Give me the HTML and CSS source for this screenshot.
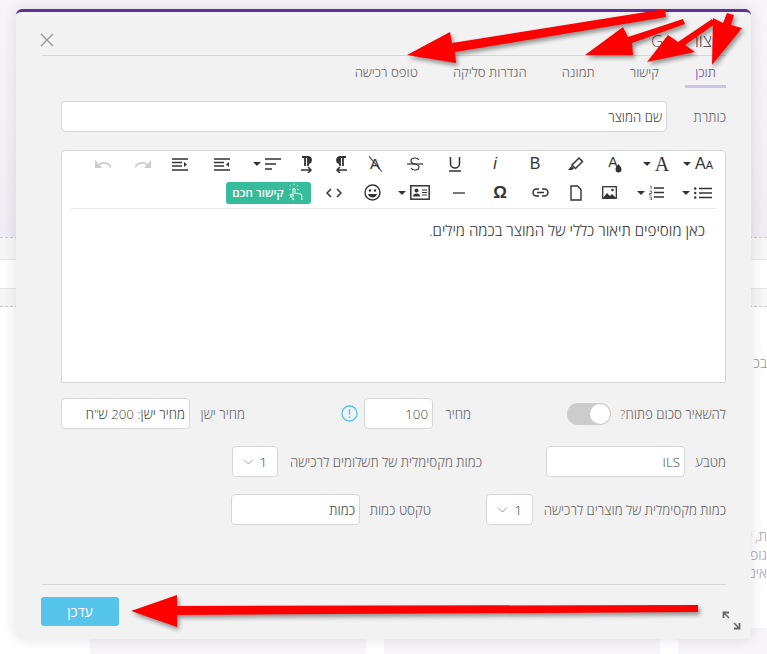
FILE: index.html
```html
<!DOCTYPE html>
<html lang="he">
<head>
  <title>עריכת מוצר</title>
  <link rel="stylesheet" href="styles.css">
</head>
<body>
  <!-- page behind the dialog -->
  <div class="backdrop">
    <div class="back-top"></div>
    <div class="back-band"></div>
    <div class="back-gap"></div>
    <div class="back-band back-band-low"></div>
    <div class="back-body">
      <p class="back-line">בכ</p>
      <div class="back-para">
        <p>ת, א</p>
        <p>גופ</p>
        <p>אינ</p>
      </div>
    </div>
    <div class="back-cards">
      <div class="back-card"></div>
      <div class="back-card"></div>
      <div class="back-card"></div>
    </div>
  </div>

  <div class="modal">
    <div class="modal-head">
      <h3 class="modal-title">צור Gr</h3>
      <svg class="close-icon" width="16" height="16" viewBox="0 0 16 16"><path d="M2 2l12 12M14 2L2 14" stroke="#999" stroke-width="1.4" fill="none"/></svg>
    </div>

    <div class="tabs">
      <a class="tab tab-active">תוכן</a>
      <a class="tab">קישור</a>
      <a class="tab">תמונה</a>
      <a class="tab">הגדרות סליקה</a>
      <a class="tab">טופס רכישה</a>
    </div>

    <div class="modal-body">
      <div class="row row-title">
        <label class="label label-title">כותרת</label>
        <input class="input input-title" type="text" value="שם המוצר">
      </div>

      <div class="editor">
        <div class="toolbar">
          <div class="tool-row">
            <span class="tool w42"><span class="glyph glyph-size">A<small>A</small></span><i class="caret"></i></span>
            <span class="tool w42"><span class="glyph glyph-serif">A</span><i class="caret"></i></span>
            <span class="tool tool-color"><span class="glyph glyph-color">A</span><svg class="drop" width="7" height="9" viewBox="0 0 7 9"><path d="M3.500 0c2 2.500 3 3.500 3 5.500a3 3 0 0 1-6 0C.5 3.500 1.500 2.500 3.500 0z" fill="#333"/></svg></span>
            <span class="tool"><svg width="17" height="16" viewBox="0 0 17 16"><path d="M5 9l7-7 3.500 3.500-7 7z" fill="none" stroke="#333" stroke-width="1.500"/><path d="M4.500 10l2.500 2.500-2 1.500H1z" fill="#333"/></svg></span>
            <span class="tool"><span class="glyph">B</span></span>
            <span class="tool"><span class="glyph glyph-italic">i</span></span>
            <span class="tool"><svg width="14" height="16" viewBox="0 0 14 16"><path d="M2.500 1v6.500a4.500 4.500 0 0 0 9 0V1" fill="none" stroke="#333" stroke-width="1.500"/><path d="M1 15h12" stroke="#333" stroke-width="1.500"/></svg></span>
            <span class="tool"><svg width="16" height="14" viewBox="0 0 16 14"><path d="M12 3c-1-1.500-2.500-2-4-2-2.500 0-4 1.300-4 3 0 4 8 2 8 6 0 1.800-1.700 3-4 3-1.800 0-3.200-.7-4-2" fill="none" stroke="#333" stroke-width="1.200"/><path d="M0 7h16" stroke="#333" stroke-width="1.200"/></svg></span>
            <span class="tool"><span class="glyph glyph-clear">A</span></span>
            <span class="tool w28"><svg width="13" height="17" viewBox="0 0 13 17"><path d="M5 1h6M5 1v9M8 1v9M5 1a3 3 0 0 0 0 6" fill="#333" stroke="#333" stroke-width="1.800"/><path d="M12 14H2M5 11l-3 3 3 3" fill="none" stroke="#333" stroke-width="1.500"/></svg></span>
            <span class="tool"><svg width="13" height="17" viewBox="0 0 13 17"><path d="M1 1h6M4 1v9M7 1v9M7 1a3 3 0 0 1 0 6" fill="#333" stroke="#333" stroke-width="1.800"/><path d="M0 14h10M7 11l3 3-3 3" fill="none" stroke="#333" stroke-width="1.500"/></svg></span>
            <span class="tool"><svg width="16" height="12" viewBox="0 0 16 12"><path d="M0 1h16M0 6h11M0 11h7" stroke="#333" stroke-width="1.500"/></svg><i class="caret"></i></span>
            <span class="tool w50"><svg width="16" height="13" viewBox="0 0 16 13"><path d="M0 1h16M0 12h16M0 4.500h10M0 8h10" stroke="#333" stroke-width="1.400"/><path d="M15 4v5l-3-2.500z" fill="#333"/></svg></span>
            <span class="tool w34"><svg width="16" height="13" viewBox="0 0 16 13"><path d="M0 1h16M0 12h16M0 4.500h10M0 8h10" stroke="#333" stroke-width="1.400"/><path d="M12 4v5l3-2.500z" fill="#333"/></svg></span>
            <span class="tool"><svg width="16" height="8" viewBox="0 0 16 8"><path d="M0 7.500C2 3 7 1 13 5" fill="none" stroke="#ccc" stroke-width="1.800"/><path d="M16 0v8H9z" fill="#ccc"/></svg></span>
            <span class="tool"><svg width="16" height="8" viewBox="0 0 16 8"><path d="M16 7.500C14 3 9 1 3 5" fill="none" stroke="#ccc" stroke-width="1.800"/><path d="M0 0v8h7z" fill="#ccc"/></svg></span>
          </div>
          <div class="tool-row tool-row-low">
            <span class="tool w44"><svg width="18" height="12" viewBox="0 0 18 12"><path d="M5 1.500h13M5 6h13M5 10.500h13" stroke="#333" stroke-width="1.500"/><circle cx="1.200" cy="1.500" r="1.200" fill="#333"/><circle cx="1.200" cy="6" r="1.200" fill="#333"/><circle cx="1.200" cy="10.500" r="1.200" fill="#333"/></svg><i class="caret"></i></span>
            <span class="tool w50"><svg width="15" height="15" viewBox="0 0 15 15"><path d="M5 3h10M5 7.500h10M5 12h10" stroke="#333" stroke-width="1.500"/><path d="M1 1h1.200v3M.5 6h2v2.500h-2v1.500h2M.5 12h2v3h-2" fill="none" stroke="#333" stroke-width=".7"/></svg><i class="caret"></i></span>
            <span class="tool w32"><svg width="15" height="13" viewBox="0 0 15 13"><rect x=".7" y=".7" width="13.600" height="11.600" fill="none" stroke="#333" stroke-width="1.300"/><path d="M1 12l4-5 3 3 2-2 4 4z" fill="#333"/><circle cx="10.500" cy="4" r="1.300" fill="#333"/></svg></span>
            <span class="tool w34"><svg width="12" height="16" viewBox="0 0 12 16"><path d="M1 1h6.500L11 4.500V15H1z" fill="none" stroke="#333" stroke-width="1.400"/></svg></span>
            <span class="tool w38"><svg width="17" height="9" viewBox="0 0 17 9"><path d="M7 1H4.500a3.500 3.500 0 0 0 0 7H7M10 1h2.500a3.500 3.500 0 0 1 0 7H10M5 4.500h7" fill="none" stroke="#333" stroke-width="1.500"/></svg></span>
            <span class="tool w42"><span class="glyph glyph-omega">Ω</span></span>
            <span class="tool"><svg width="12" height="2" viewBox="0 0 12 2"><path d="M0 1h12" stroke="#555" stroke-width="1.600"/></svg></span>
            <span class="tool w50"><svg width="20" height="15" viewBox="0 0 20 15"><rect x=".8" y=".8" width="18.400" height="13.400" fill="none" stroke="#333" stroke-width="1.500"/><circle cx="6.500" cy="5.500" r="2" fill="#333"/><path d="M3 11.500c0-2 1.500-3 3.500-3s3.500 1 3.500 3z" fill="#333"/><path d="M12 5h5M12 7.500h5M12 10h5" stroke="#333"/></svg><i class="caret"></i></span>
            <span class="tool w34"><svg width="17" height="17" viewBox="0 0 17 17"><circle cx="8.500" cy="8.500" r="7.500" fill="none" stroke="#333" stroke-width="1.400"/><circle cx="6" cy="6.500" r="1.200" fill="#333"/><circle cx="11" cy="6.500" r="1.200" fill="#333"/><path d="M4 10h9c-.5 2-2.200 3.500-4.500 3.500S4.500 12 4 10z" fill="#333"/></svg></span>
            <span class="tool w42"><svg width="16" height="10" viewBox="0 0 16 10"><path d="M5 1L1 5l4 4M11 1l4 4-4 4" fill="none" stroke="#333" stroke-width="1.500"/></svg></span>
            <button class="smart-link">
              <svg width="18" height="19" viewBox="0 0 18 19"><path d="M7 17l-3.500-4c-.8-1 .5-2 1.500-1.200l1 1V6.500c0-1.500 2-1.500 2 0V10l5 .8c1 .2 1.800 1 1.800 2V17" fill="none" stroke="#d8f3ea" stroke-width="1.200"/><path d="M3 2l1.500 2M7 .5V3M11 2L9.500 4M2 6.500h2M10 6.500h2" stroke="#d8f3ea" stroke-dasharray="1.500 .8"/></svg>
              קישור חכם
            </button>
          </div>
        </div>
        <div class="editor-text">
          <p>כאן מוסיפים תיאור כללי של המוצר בכמה מילים.</p>
        </div>
      </div>

      <div class="row row-fields">
        <label class="label label-open">להשאיר סכום פתוח?</label>
        <span class="toggle"><i class="knob"></i></span>
        <label class="label label-price">מחיר</label>
        <input class="input input-price" type="text" value="100">
        <svg class="info-icon" width="17" height="17" viewBox="0 0 17 17"><circle cx="8.500" cy="8.500" r="7.500" fill="none" stroke="#56c5ec" stroke-width="1.300"/><path d="M8.500 4v5.500M8.500 11.500v1.500" stroke="#56c5ec" stroke-width="1.500"/></svg>
        <label class="label label-old">מחיר ישן</label>
        <input class="input input-old" type="text" value="מחיר ישן: 200 ש&quot;ח">
      </div>

      <div class="row row-fields">
        <label class="label label-currency">מטבע</label>
        <input class="input input-currency" type="text" value="ILS">
        <label class="label label-pay">כמות מקסימלית של תשלומים לרכישה</label>
        <span class="select select-pay">1<svg width="11" height="6" viewBox="0 0 11 6"><path d="M1 .5l4.500 4.500L10 .5" fill="none" stroke="#999"/></svg></span>
      </div>

      <div class="row row-fields">
        <label class="label label-max">כמות מקסימלית של מוצרים לרכישה</label>
        <span class="select select-max">1<svg width="11" height="6" viewBox="0 0 11 6"><path d="M1 .5l4.500 4.500L10 .5" fill="none" stroke="#999"/></svg></span>
        <label class="label label-qty">טקסט כמות</label>
        <input class="input input-qty" type="text" value="כמות">
      </div>
    </div>

    <div class="modal-foot">
      <svg class="expand-icon" width="19" height="19" viewBox="0 0 19 19"><path d="M2 2l5 5M12 12l5 5" stroke="#666" stroke-width="1.500"/><path d="M1.500 7V1.500H7M12 17.500h5.500V12" fill="none" stroke="#666" stroke-width="1.800"/></svg>
      <button class="save-btn">עדכן</button>
    </div>
  </div>

  <!-- red arrows drawn over the screenshot -->
  <svg class="arrows" width="767" height="654" viewBox="0 0 767 654">
    <polygon points="665,9 666,17 455,52 456,63 407,55 450,32 452,43"/>
    <polygon points="683,19 685,24 632,43 633,55 585,55 623,27 628,37"/>
    <polygon points="712,19 715,24 685,45 695,52 647,62 668,35 678,42"/>
    <polygon points="727,13 734,15 731,25 742,28 712,65 713,18 723,23"/>
    <polygon points="698,605 698,612 177,615 177,627 131,611 177,595 177,606"/>
  </svg>
</body>
</html>
```

FILE: styles.css
```css
* {
  box-sizing: border-box;
}

html, body {
  margin: 0;
  padding: 0;
  height: 654px;
  overflow: hidden;
}

body {
  position: relative;
  width: 767px;
  background-color: #fff;
  font-family: "Open Sans", "Liberation Sans", sans-serif;
  font-weight: 300;
  color: #666;
  font-size: 13px;
}

p {
  margin: 0;
}

/* page behind the dialog */
.backdrop {
  display: flex;
  flex-direction: column;
  height: 654px;
}

.back-top {
  height: 238px;
  background-color: #f8f5fa;
  background-image: linear-gradient(#f8f5fa, #f1ecf3);
  border-bottom: 1px dashed #ccc;
}

.back-band {
  height: 22px;
  background-color: #f6f6f6;
  border-bottom: 1px solid #e6e6e6;
}

.back-gap {
  height: 28px;
}

.back-band-low {
  height: 19px;
  border-top: 1px solid #e6e6e6;
  border-bottom: 1px dashed #ccc;
}

.back-body {
  flex: 1;
  direction: rtl;
  color: #9a9a9a;
  font-size: 14px;
  padding-top: 46px;
}

.back-para {
  margin-top: 155px;
  line-height: 18.500px;
  color: #a5a5b5;
}

.back-cards {
  display: flex;
  gap: 18px;
  height: 26px;
  padding-left: 90px;
}

.back-card {
  flex: 0 0 276px;
  background-color: #f8f5fa;
}

.back-card:last-child {
  flex: 1 1 0;
}

/* dialog */
.modal {
  position: absolute;
  left: 16px;
  top: 9px;
  width: 735px;
  height: 630px;
  direction: rtl;
  background-color: #f2f2f2;
  border-top: 3px solid #5c3398;
  border-radius: 6px;
  box-shadow: 0 0 14px rgba(0, 0, 0, 0.12);
  padding: 0 25px 0 26px;
}

.modal-head {
  display: flex;
  align-items: center;
  justify-content: space-between;
  height: 44px;
  padding-top: 13px;
  padding-right: 14px;
  border-bottom: 1px solid #d6d6d6;
}

.modal-title {
  margin: 0;
  font-size: 17px;
  font-weight: 300;
  word-spacing: 16px;
  color: #555;
}

.close-icon {
  margin-left: -3px;
}

.tabs {
  display: flex;
  height: 32px;
}

.tab {
  display: block;
  padding: 7px 0 0;
  font-size: 13.200px;
  color: #666;
  margin-left: 35px;
}

.tab-active {
  width: 41px;
  margin-left: 26px;
  text-align: center;
  color: #6f4bb0;
  border-bottom: 3px solid #cfc2e3;
}

.modal-body {
  padding-top: 13px;
}

.row {
  display: flex;
  align-items: center;
}

.label {
  flex: none;
  white-space: nowrap;
  font-size: 13.300px;
}

.input {
  flex: none;
  height: 31px;
  padding: 0 4px;
  direction: rtl;
  border: 1px solid #d6d6d6;
  border-radius: 4px;
  background-color: #fff;
  color: #444;
  font-family: inherit;
  font-weight: 300;
  font-size: 13.300px;
}

.label-title {
  width: 59px;
}

.input-title {
  width: 606px;
}

/* editor */
.editor {
  margin: 18px 0 15px;
  width: 665px;
  height: 233px;
  background-color: #fff;
  border: 1px solid #d6d6d6;
  border-radius: 4px 4px 0 0;
}

.toolbar {
  margin: 0 9px;
  height: 58px;
  border-bottom: 1px solid #e8e8e8;
}

.tool-row {
  display: flex;
  height: 26px;
  margin-right: -3px;
}

.tool-row-low {
  height: 31px;
}

.tool {
  flex: none;
  display: flex;
  align-items: center;
  justify-content: center;
  gap: 4px;
  width: 40px;
}

.tool-color {
  direction: ltr;
  gap: 0;
}

.w28 { width: 28px; }
.w32 { width: 32px; }
.w34 { width: 34px; }
.w38 { width: 38px; }
.w42 { width: 42px; }
.w44 { width: 44px; }
.w50 { width: 50px; }

.caret {
  width: 0;
  height: 0;
  border-left: 4px solid transparent;
  border-right: 4px solid transparent;
  border-top: 4px solid #333;
}

.glyph {
  direction: ltr;
  font-family: "Liberation Sans", sans-serif;
  font-size: 16px;
  font-weight: 400;
  line-height: 18px;
  color: #333;
}

.glyph small {
  font-size: 11px;
}

.glyph-serif {
  font-family: "Liberation Serif", serif;
  font-size: 20px;
  line-height: 20px;
}

.glyph-italic {
  font-style: italic;
}

.glyph-color {
  font-size: 14px;
  margin: -4px -3px 0 0;
}

.drop {
  margin-top: 9px;
}

.glyph-clear {
  position: relative;
  font-size: 15px;
}

/* slash over the clear-format letter */
.glyph-clear::after {
  content: "";
  position: absolute;
  left: 5px;
  top: -1px;
  width: 1.300px;
  height: 20px;
  background-color: #333;
  transform: rotate(-40deg);
}

.glyph-omega {
  font-size: 17px;
  font-weight: bold;
}

.smart-link {
  flex: none;
  align-self: center;
  display: flex;
  align-items: center;
  justify-content: center;
  gap: 3px;
  width: 85px;
  height: 22px;
  margin: 0 2px 0 0;
  padding: 0;
  border: none;
  border-radius: 3px;
  background-color: #37bc9b;
  color: #fff;
  font-family: inherit;
  font-size: 11.500px;
  font-weight: 600;
}

.editor-text {
  padding: 11px 20px 0;
  color: #333;
  font-size: 15.200px;
}

/* form rows */
.row-fields {
  margin-bottom: 17px;
}

.toggle {
  flex: none;
  display: flex;
  justify-content: flex-start;
  align-items: center;
  width: 44px;
  height: 22px;
  padding: 0 1px;
  margin-left: 96px;
  background-color: #ccc;
  border-radius: 11px;
}

.knob {
  display: block;
  width: 20px;
  height: 20px;
  border-radius: 50%;
  background-color: #fff;
}

.label-open {
  width: 115px;
}

.label-price {
  width: 38px;
}

.input-price {
  width: 69px;
  margin-left: 6px;
}

.info-icon {
  flex: none;
  margin-left: 96px;
}

.label-old {
  width: 55px;
}

.input-old {
  width: 129px;
}

.label-currency {
  width: 41px;
}

.input-currency {
  width: 139px;
  margin-left: 64px;
}

.label-pay {
  width: 204px;
}

.select {
  flex: none;
  display: flex;
  align-items: center;
  justify-content: space-between;
  height: 31px;
  padding: 0 10px;
  border: 1px solid #d6d6d6;
  border-radius: 4px;
  background-color: #fff;
  color: #444;
  font-size: 13.300px;
}

.select-pay {
  width: 46px;
}

.select-max {
  width: 47px;
  margin-left: 55px;
}

.label-max {
  width: 193px;
}

.label-qty {
  width: 71px;
}

.input-qty {
  width: 129px;
}

/* footer */
.modal-foot {
  position: absolute;
  left: 26px;
  right: 25px;
  top: 572px;
  height: 56px;
  display: flex;
  justify-content: space-between;
  border-top: 1px solid #d6d6d6;
}

.save-btn {
  width: 78px;
  height: 29px;
  margin: 12px 0 0 -1px;
  border: none;
  border-radius: 3px;
  background-color: #56c5ec;
  color: #fff;
  font-family: inherit;
  font-size: 14px;
  font-weight: 400;
}

.expand-icon {
  margin: 26px -15px 0 0;
}

.arrows {
  position: absolute;
  left: 0;
  top: 0;
  pointer-events: none;
  filter: drop-shadow(2px 3px 2px rgba(0, 0, 0, 0.4));
}

.arrows polygon {
  fill: #ff0000;
}
```
